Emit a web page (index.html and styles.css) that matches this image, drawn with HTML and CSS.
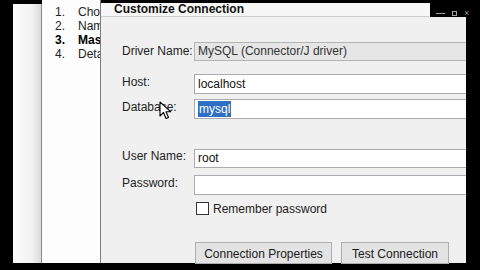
FILE: index.html
```html
<!DOCTYPE html>
<html lang="en">
<head>
  <meta charset="UTF-8">
  <title>Customize Connection</title>
  <link rel="stylesheet" href="styles.css">
</head>
<body>
  <div class="screen">
    <!-- linker Rand vom Wizard -->
    <div class="side-strip"></div>

    <!-- Schritte -->
    <div class="steps">
      <ol class="step-list">
        <li><span class="num">1.</span>Choose Driver</li>
        <li><span class="num">2.</span>Name Connection</li>
        <li class="current"><span class="num">3.</span>Master Data</li>
        <li><span class="num">4.</span>Details</li>
      </ol>
    </div>

    <!-- Dialog -->
    <div class="dialog">
      <div class="title-row">
        <div class="title">Customize Connection</div>
        <div class="win-controls">
          <span class="ctl-min"></span>
          <span class="ctl-max"></span>
          <span class="ctl-close">×</span>
        </div>
      </div>

      <div class="form">
        <div class="row row-driver">
          <label class="lbl">Driver Name:</label>
          <div class="field disabled">MySQL (Connector/J driver)</div>
        </div>
        <div class="row row-host">
          <label class="lbl">Host:</label>
          <div class="field">localhost</div>
        </div>
        <div class="row row-db">
          <label class="lbl">Database:</label>
          <div class="field"><span class="selected">mysql</span></div>
          <svg class="cursor" width="14" height="20" viewBox="0 0 14 20">
            <path d="M1 1 L1 15 L4.5 11.5 L7 17.5 L9.5 16.5 L7 10.8 L11.8 10.8 Z" fill="#fff" stroke="#000" stroke-width="1.1" stroke-linejoin="round"/>
          </svg>
        </div>

        <div class="row row-user">
          <label class="lbl">User Name:</label>
          <div class="field">root</div>
        </div>
        <div class="row row-pwd">
          <label class="lbl">Password:</label>
          <div class="field"></div>
        </div>
        <div class="row row-check">
          <span class="lbl"></span>
          <span class="checkbox"></span>
          <span class="check-text">Remember password</span>
        </div>

        <div class="buttons">
          <button class="btn btn-props">Connection Properties</button>
          <button class="btn btn-test">Test Connection</button>
        </div>
      </div>
    </div>
  </div>
</body>
</html>
```

FILE: styles.css
```css
/* RESET */
* {
  margin: 0;
  padding: 0;
  box-sizing: border-box;
}

body, html {
  width: 480px;
  height: 270px;
  overflow: hidden;
  background: #000;
  font-family: "Liberation Sans", Arial, sans-serif;
  font-size: 12px;
  color: #1a1a1a;
}

.screen {
  display: flex;
  align-items: flex-start;
  height: 263px;
}

/* linker Streifen */
.side-strip {
  margin-left: 13px;
  margin-top: 4px;
  width: 29px;
  height: 259px;
  background: linear-gradient(to right, #fbfbfb, #f3f3f3 65%, #dadada);
  border-right: 1px solid #8c8c8c;
}

/* Schritte-Liste */
.steps {
  width: 58px;
  height: 263px;
  background: #fdfdfd;
  overflow: hidden;
}

.step-list {
  list-style: none;
  padding: 5px 0 0 13px;
}

.step-list li {
  height: 14px;
  line-height: 14px;
  white-space: nowrap;
  color: #222;
}

.step-list li.current {
  font-weight: bold;
  color: #000;
}

.num {
  display: inline-block;
  width: 23px;
}

/* DIALOG */
.dialog {
  width: 366px;
  height: 263px;
  background: #f0f0f0;
  border-left: 1px solid #7d7d7d;
  display: flex;
  flex-direction: column;
}

.title-row {
  display: flex;
  height: 17px;
  margin-right: -14px;
}

.title {
  flex: 1;
  background: #f7f7f7;
  border-top: 3px solid #000;
  border-bottom: 1px solid #cdcdcd;
  overflow: hidden;
  padding-left: 13px;
  font-size: 12px;
  font-weight: bold;
  line-height: 12px;
  color: #111;
}

.win-controls {
  width: 50px;
  background: #000;
  display: flex;
  align-items: center;
  gap: 7px;
  padding: 9px 0 0 6px;
  color: #9a9a9a;
}

.ctl-min {
  width: 9px;
  height: 1px;
  background: #a0a0a0;
}

.ctl-max {
  width: 5px;
  height: 5px;
  border: 1px solid #a0a0a0;
}

.ctl-close {
  font-size: 9px;
  line-height: 9px;
}

/* FORMULAR */
.form {
  padding-left: 21px;
  display: flex;
  flex-direction: column;
}

.row {
  display: flex;
  align-items: center;
  position: relative;
}

.lbl {
  width: 72px;
  flex: 0 0 72px;
  margin-bottom: 5px;
  color: #222;
}

.field {
  flex: 1;
  height: 20px;
  line-height: 18px;
  padding-left: 3px;
  background: #fff;
  border: 1px solid #a9abb0;
  border-right: none;
  color: #111;
  white-space: nowrap;
}

.field.disabled {
  background: #e6e6e6;
  border-color: #b4b4b4;
  color: #333;
}

.selected {
  background: #2f6fc3;
  color: #fff;
  padding: 1px 1px;
}

.row-driver { margin-top: 25px; height: 19px; }
.row-driver .field { height: 19px; line-height: 17px; }
.row-driver .lbl { margin-bottom: 2px; }
.row-host { margin-top: 13px; }
.row-db { margin-top: 5px; }
.row-user { margin-top: 30px; height: 19px; }
.row-user .field { height: 19px; line-height: 17px; }
.row-pwd { margin-top: 7px; }
.row-check { margin-top: 7px; height: 13px; }
.row-check .lbl { margin-bottom: 0; }

/* Mauszeiger über dem Label */
.cursor {
  position: absolute;
  left: 37px;
  top: 2px;
}

.checkbox {
  width: 13px;
  height: 13px;
  margin-left: 2px;
  background: #fff;
  border: 1px solid #333;
}

.check-text {
  margin-left: 4px;
  color: #222;
}

/* BUTTONS */
.buttons {
  display: flex;
  gap: 9px;
  margin-top: 27px;
  padding-left: 73px;
}

.btn {
  height: 22px;
  padding-top: 1px;
  font-family: "Liberation Sans", Arial, sans-serif;
  font-size: 12px;
  color: #1a1a1a;
  background: #e3e3e3;
  border: 1px solid #adadad;
}

.btn-props { width: 137px; }
.btn-test { width: 108px; }
```
